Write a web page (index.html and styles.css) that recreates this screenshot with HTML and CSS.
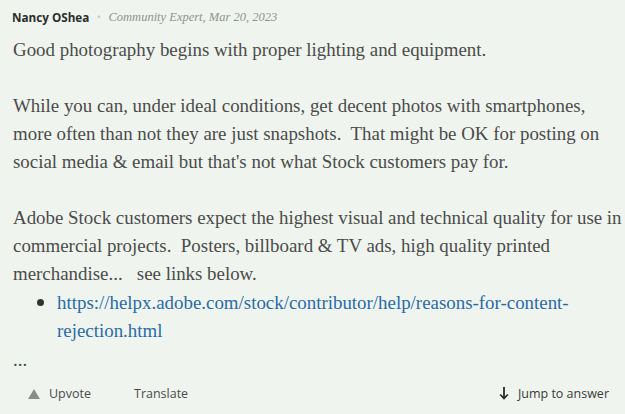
FILE: index.html
```html
<!DOCTYPE html>
<html>
<head>
<meta charset="utf-8">
<link rel="stylesheet" href="styles.css">
</head>
<body>
<div class="post">
  <div class="meta">
    <span class="author">Nancy OShea</span>
    <span class="dot">•</span>
    <span class="role">Community Expert, Mar 20, 2023</span>
  </div>
  <div class="body">
    <p>Good photography begins with proper lighting and equipment.</p>
    <p>While you can, under ideal conditions, get decent photos with smartphones, more often than not they are just snapshots.&nbsp; That might be OK for posting on social media &amp; email but that's not what Stock customers pay for.</p>
    <p class="tight">Adobe Stock customers expect the highest visual and technical quality for use in commercial projects.&nbsp; Posters, billboard &amp; TV ads, high quality printed merchandise...&nbsp;&nbsp; see links below.</p>
    <ul>
      <li><a href="#">https://helpx.adobe.com/stock/contributor/help/reasons-for-content-rejection.html</a></li>
    </ul>
    <p class="more">...</p>
  </div>
  <div class="actions">
    <div class="left">
      <span class="act"><svg class="tri" width="12" height="10" viewBox="0 0 12 10"><path d="M6 0 L12 10 L0 10 Z" fill="#8a8d8a"/></svg>Upvote</span>
      <span class="act">Translate</span>
    </div>
    <span class="act jump"><svg width="10" height="13" viewBox="0 0 10 13"><path d="M5 0 V11 M1.2 7.5 L5 11.5 L8.8 7.5" stroke="#2c2c2c" stroke-width="1.8" fill="none"/></svg>Jump to answer</span>
  </div>
</div>
</body>
</html>
```
FILE: styles.css
```css
html, body {
  margin: 0;
  padding: 0;
  background: #eff5ee;
}
.post {
  width: 625px;
  height: 414px;
  box-sizing: border-box;
  padding: 8px 0 0 12px;
  display: flex;
  flex-direction: column;
}
.meta {
  display: flex;
  align-items: center;
  gap: 8px;
  height: 18px;
}
.author {
  font-family: "Open Sans", sans-serif;
  font-weight: 700;
  font-size: 11.7px;
  color: #2c2c2c;
}
.dot {
  font-family: "Liberation Sans", sans-serif;
  font-size: 9px;
  color: #c4c8c4;
}
.role {
  font-family: "Liberation Serif", serif;
  font-style: italic;
  font-size: 12.5px;
  color: #8f928f;
}
.body {
  margin-top: 10px;
  padding-left: 1px;
  font-family: "Liberation Serif", serif;
  font-size: 18.9px;
  line-height: 28px;
  color: #4b4b4b;
  width: 612px;
}
.body p {
  margin: 0 0 28px 0;
}
.body p.tight {
  margin-bottom: 0;
}
.body ul {
  margin: 0;
  padding-left: 44px;
}
.body li::marker {
  font-size: 22px;
  color: #333;
}
.body a {
  color: #2a6aa8;
  text-decoration: none;
}
.body p.more {
  margin: 0;
  line-height: 30px;
}
.actions {
  margin-top: 10px;
  display: flex;
  justify-content: space-between;
  align-items: center;
  padding-right: 16px;
  font-family: "Open Sans", sans-serif;
  font-size: 12.5px;
  color: #4b4b4b;
}
.left {
  display: flex;
  gap: 43px;
  padding-left: 16px;
}
.act {
  display: flex;
  align-items: center;
  gap: 9px;
}
.jump {
  gap: 9px;
  color: #3a3a3a;
}
```
